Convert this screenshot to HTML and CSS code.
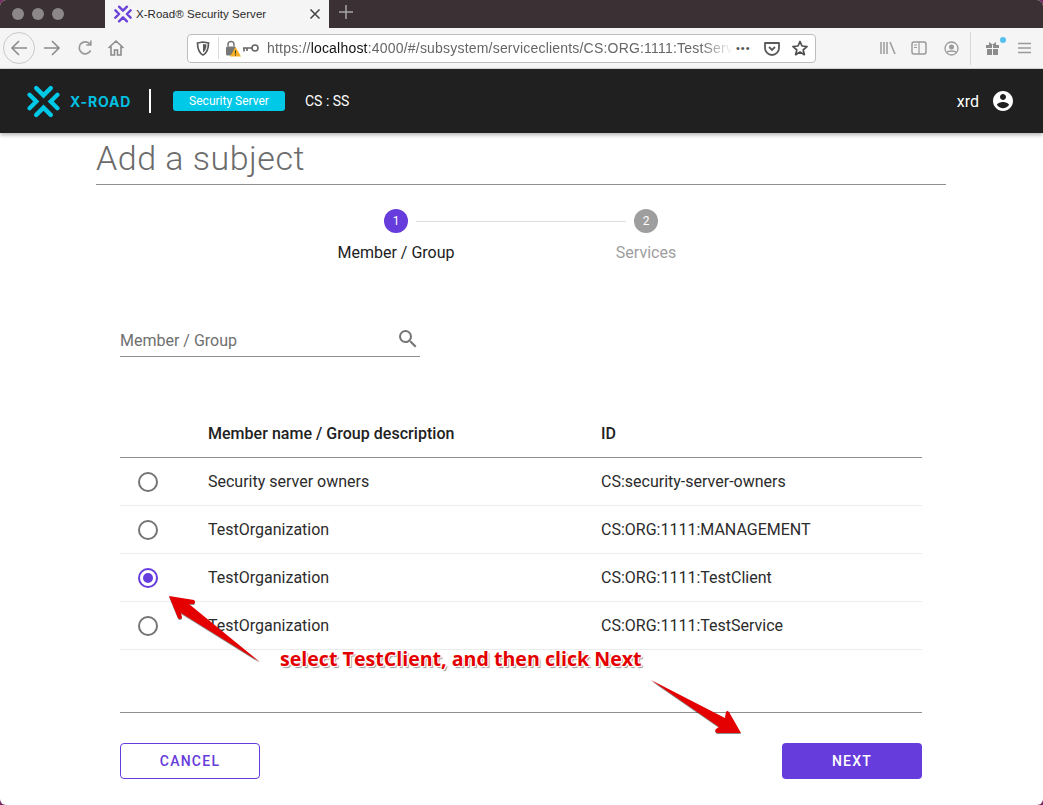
FILE: index.html
```html
<!DOCTYPE html>
<html lang="en">
<head>
<meta charset="utf-8">
<title>X-Road Security Server</title>
<link rel="stylesheet" href="styles.css">
</head>
<body>
<div class="window">
  <div class="tabbar">
    <div class="lights"><i></i><i></i><i></i></div>
    <div class="tab">
      <svg class="tab-logo" width="18" height="18" viewBox="0 0 32 32"><path d="M9 3 16 10 23 3M2.500 9.500 9 16 2.500 22.500M29.500 9.500 23 16 29.500 22.500M9 29 16 22 23 29" fill="none" stroke="#6a42d8" stroke-width="4.200" stroke-linecap="round" stroke-linejoin="round"/></svg>
      <span class="tab-title">X-Road® Security Server</span>
      <svg class="tab-close" width="12" height="12" viewBox="0 0 12 12"><path d="M1.500 1.500 10.500 10.500M10.500 1.500 1.500 10.500" stroke="#444" stroke-width="1.500" fill="none"/></svg>
    </div>
    <svg class="newtab" width="16" height="16" viewBox="0 0 16 16"><path d="M8 1V15M1 8H15" stroke="#a8a4a5" stroke-width="1.500"/></svg>
  </div>

  <div class="toolbar">
    <div class="back"><svg width="18" height="18" viewBox="0 0 18 18"><path d="M17 9H2M9 2 2 9 9 16" fill="none" stroke="#8c8c8c" stroke-width="1.600"/></svg></div>
    <svg class="tool" width="18" height="18" viewBox="0 0 18 18"><path d="M1 9H16M9 2 16 9 9 16" fill="none" stroke="#8c8c8c" stroke-width="1.600"/></svg>
    <svg class="tool tool-tight" width="18" height="18" viewBox="0 0 18 18"><path d="M14.600 11.500A6 6 0 1 1 14 5.200M14.800 1.500V6H10.300" fill="none" stroke="#999" stroke-width="1.700"/></svg>
    <svg class="tool" width="18" height="18" viewBox="0 0 18 18"><path d="M1.500 9 9 2 16.500 9M4 7.500V16H7.500V11H10.500V16H14V7.500" fill="none" stroke="#8c8c8c" stroke-width="1.600"/></svg>
    <div class="urlbar">
      <svg class="shield" width="14" height="15" viewBox="0 0 14 15"><path d="M1.500 2 7 1 12.500 2C12.500 8 11 12 7 14 3 12 1.500 8 1.500 2Z" fill="none" stroke="#5a5a5a" stroke-width="1.700"/><path d="M7 3 10.500 3.500C10.500 7 9.500 10 7 11.500Z" fill="#5a5a5a"/></svg>
      <span class="url-sep"></span>
      <svg class="lock" width="16" height="17" viewBox="0 0 16 17"><path d="M3 6.500V4.500A3 3 0 0 1 9 4.500V6.500" fill="none" stroke="#777" stroke-width="1.500"/><rect x="1" y="6.500" width="10" height="9" rx="1.500" fill="#777"/><path d="M10.500 7 16 16.500H5Z" fill="#f5b022"/><path d="M10.500 10.500V13.500M10.500 14.300V15.500" stroke="#333" stroke-width="1"/></svg>
      <svg class="key" width="18" height="10" viewBox="0 0 18 10"><circle cx="13" cy="5" r="3" fill="none" stroke="#666" stroke-width="1.600"/><path d="M10 5H1M2 5V8.500M5 5V8" stroke="#666" stroke-width="1.600" fill="none"/></svg>
      <span class="url"><span class="url-dim">https://</span><span class="url-host">localhost</span><span class="url-dim">:4000/#/subsystem/serviceclients/CS:ORG:1111:TestServ</span></span>
      <span class="dots">•••</span>
      <svg class="pocket" width="16" height="15" viewBox="0 0 16 15"><path d="M1 2H15V7A7 7 0 0 1 1 7Z" fill="none" stroke="#5a5a5a" stroke-width="1.800" stroke-linejoin="round"/><path d="M5 6 8 9 11 6" fill="none" stroke="#5a5a5a" stroke-width="1.800"/></svg>
      <svg class="star" width="16" height="16" viewBox="0 0 16 16"><path d="M8 1.500 10 6 15 6.500 11.200 9.800 12.300 14.700 8 12.100 3.700 14.700 4.800 9.800 1 6.500 6 6Z" fill="none" stroke="#4d4d4d" stroke-width="1.700" stroke-linejoin="round"/></svg>
    </div>
    <div class="tools-right">
      <svg width="16" height="14" viewBox="0 0 16 14"><path d="M1 1V13M4 1V13M7 1V13M10 1 15 13" stroke="#9a9a9a" stroke-width="1.500" fill="none"/></svg>
      <svg width="16" height="14" viewBox="0 0 16 14"><rect x="1" y="1" width="14" height="12" rx="2" fill="none" stroke="#9a9a9a" stroke-width="1.500"/><path d="M8 1V13M3 4H6M3 6.500H6" stroke="#9a9a9a" stroke-width="1.200" fill="none"/></svg>
      <svg class="profile" width="15" height="15" viewBox="0 0 15 15"><circle cx="7.500" cy="7.500" r="6.500" fill="none" stroke="#9a9a9a" stroke-width="1.300"/><circle cx="7.500" cy="6" r="2.500" fill="#9a9a9a"/><path d="M3 11.500C4 9.500 11 9.500 12 11.500" stroke="#9a9a9a" stroke-width="1.500" fill="none"/></svg>
      <span class="tool-sep"></span>
      <span class="gift"><svg width="15" height="15" viewBox="0 0 15 15"><path d="M4 1 7.500 3.500 11 1V4H4Z" fill="#8c8c8c"/><rect x="1" y="4" width="6" height="3" fill="#8c8c8c"/><rect x="8" y="4" width="6" height="3" fill="#8c8c8c"/><rect x="2" y="8" width="5" height="6" fill="#8c8c8c"/><rect x="8" y="8" width="5" height="6" fill="#8c8c8c"/></svg><i class="gift-dot"></i></span>
      <svg width="13" height="12" viewBox="0 0 13 12"><path d="M0 1.500H13M0 6H13M0 10.500H13" stroke="#9a9a9a" stroke-width="1.400"/></svg>
    </div>
  </div>

  <header class="appbar">
    <svg class="logo" width="33" height="33" viewBox="0 0 32 32"><path d="M9 3 16 10 23 3M2.500 9.500 9 16 2.500 22.500M29.500 9.500 23 16 29.500 22.500M9 29 16 22 23 29" fill="none" stroke="#00c9e7" stroke-width="4.200" stroke-linecap="round" stroke-linejoin="miter"/></svg>
    <span class="brand">X-ROAD</span>
    <span class="brand-sep"></span>
    <span class="badge">Security Server</span>
    <span class="server-id">CS : SS</span>
    <span class="user">xrd</span>
    <svg class="avatar" width="24" height="24" viewBox="0 0 24 24"><path fill="#fff" d="M12 2C6.480 2 2 6.480 2 12s4.480 10 10 10 10-4.480 10-10S17.520 2 12 2zm0 3c1.660 0 3 1.340 3 3s-1.340 3-3 3-3-1.340-3-3 1.340-3 3-3zm0 14.200c-2.500 0-4.710-1.280-6-3.220.03-1.990 4-3.080 6-3.080 1.990 0 5.970 1.090 6 3.080-1.290 1.940-3.500 3.220-6 3.220z"/></svg>
  </header>

  <main class="page">
    <h1 class="title">Add a subject</h1>

    <div class="stepper">
      <div class="step">
        <span class="dot dot-active">1</span>
        <span class="step-label">Member / Group</span>
      </div>
      <span class="step-line"></span>
      <div class="step">
        <span class="dot">2</span>
        <span class="step-label step-label-off">Services</span>
      </div>
    </div>

    <div class="body">
      <div class="search">
        <span>Member / Group</span>
        <svg width="24" height="24" viewBox="0 0 24 24"><path fill="#757575" d="M15.500 14h-.79l-.28-.27A6.470 6.470 0 0 0 16 9.500 6.500 6.500 0 1 0 9.500 16c1.610 0 3.090-.59 4.230-1.570l.27.28v.79l5 4.990L20.490 19l-4.990-5zm-6 0C7.010 14 5 11.990 5 9.500S7.010 5 9.500 5 14 7.010 14 9.500 11.990 14 9.500 14z"/></svg>
      </div>

      <div class="table">
        <div class="row row-head"><span></span><span>Member name / Group description</span><span>ID</span></div>
        <div class="row"><span class="radio"></span><span>Security server owners</span><span>CS:security-server-owners</span></div>
        <div class="row"><span class="radio"></span><span>TestOrganization</span><span>CS:ORG:1111:MANAGEMENT</span></div>
        <div class="row"><span class="radio radio-on"></span><span>TestOrganization</span><span>CS:ORG:1111:TestClient</span></div>
        <div class="row"><span class="radio"></span><span>TestOrganization</span><span>CS:ORG:1111:TestService</span></div>
      </div>

      <div class="footer">
        <button class="btn btn-outline">CANCEL</button>
        <button class="btn btn-fill">NEXT</button>
      </div>
    </div>
  </main>

  <svg class="arrow arrow-left" width="100" height="75" viewBox="0 0 100 75"><path d="M0 1 25 5Q27 7 25 9L20 9 91 67 12 18 13 23Q11 25 9 23Z" fill="#e40000"/></svg>
  <svg class="arrow arrow-right" width="100" height="60" viewBox="0 0 100 60"><path d="M0 0 74 38 75 32Q76 30 78 32L90 53 66 53Q63 51 65 49L68 47Z" fill="#e40000"/></svg>
  <div class="note">select TestClient, and then click Next</div>
</div>
</body>
</html>
```
FILE: styles.css
```css
* { box-sizing: border-box; }
html, body { margin: 0; height: 100%; background: #7a2a63; }
body { font-family: Roboto, "Liberation Sans", sans-serif; overflow: hidden; }
.window {
  position: relative;
  width: 1043px;
  height: 805px;
  background: #fff;
  border-radius: 6px;
  overflow: hidden;
  display: flex;
  flex-direction: column;
}

/* browser chrome */
.tabbar { height: 28px; background: #3b3033; display: flex; align-items: center; flex: none; }
.lights { display: flex; gap: 8px; padding-left: 12px; width: 105px; }
.lights i { width: 12px; height: 12px; border-radius: 50%; background: #8c8889; }
.tab { width: 224px; height: 28px; background: #f5f5f5; display: flex; align-items: center; padding-left: 9px; }
.tab-title { font: 11.500px "Liberation Sans", sans-serif; letter-spacing: .04px; color: #2a2a2a; margin-left: 4px; width: 173px; }
.tab-logo { flex: none; }
.newtab { margin-left: 9px; margin-top: -4px; }

.toolbar { height: 41px; background: #f5f5f5; border-bottom: 1px solid #dcdcdc; display: flex; align-items: center; flex: none; padding-left: 3px; }
.back { width: 32px; height: 32px; border: 1px solid #c9c9c9; border-radius: 50%; display: flex; align-items: center; justify-content: center; margin-right: 8px; }
.tool { margin-right: 15px; }
.tool-tight { margin-right: 13px; }
.urlbar { width: 629px; height: 29px; margin-left: 47px; background: #fff; border: 1px solid #bdbdbd; border-radius: 4px; display: flex; align-items: center; padding-left: 8px; }
.url-sep { width: 1px; height: 22px; background: #dcdcdc; margin: 0 6px 0 8px; }
.key { margin-left: 1px; }
.url { font: 14px "Liberation Sans", sans-serif; letter-spacing: .2px; margin-left: 7px; width: 466px; white-space: nowrap; -webkit-mask-image: linear-gradient(to right, #000 93%, transparent 100%); mask-image: linear-gradient(to right, #000 93%, transparent 100%); }
.url-dim { color: #666; }
.url-host { color: #111; }
.dots { font: 11px "Liberation Sans", sans-serif; color: #555; margin-left: 3px; letter-spacing: 1px; }
.pocket { margin-left: 13px; }
.star { margin-left: 12px; }
.tools-right { display: flex; align-items: center; margin-left: 64px; gap: 15px; }
.profile { margin-left: 2px; }
.tool-sep { width: 1px; height: 33px; background: #d8d8d8; margin-left: -4px; margin-right: -1px; }
.gift { position: relative; display: flex; margin-right: 3px; }
.gift-dot { position: absolute; top: -4px; right: -6px; width: 6px; height: 6px; border-radius: 50%; background: #55bfee; }

/* app bar */
.appbar { height: 64px; background: #202020; display: flex; align-items: center; padding-left: 27px; flex: none; box-shadow: 0 2px 4px rgba(0,0,0,.3); position: relative; }
.brand { font-family: Inter, Roboto, sans-serif; font-weight: 700; font-size: 14px; letter-spacing: .8px; color: #00c0e0; margin-left: 10px; width: 62px; white-space: nowrap; }
.brand-sep { width: 2px; height: 24px; background: #fff; margin-left: 17px; }
.badge { width: 112px; height: 20px; margin-left: 22px; background: #00c9e7; border-radius: 3px; color: #fff; font-size: 12px; line-height: 20px; text-align: center; }
.server-id { color: #fff; font-size: 14px; margin-left: 20px; }
.user { color: #fff; font-size: 16px; margin-left: auto; }
.avatar { margin: 0 28px 0 12px; }

/* page */
.page { width: 850px; margin-left: 96px; flex: 1; display: flex; flex-direction: column; min-height: 0; }
.title { margin: 0; height: 52px; border-bottom: 1px solid #8f8f8f; font-weight: 300; font-size: 34px; line-height: 50px; color: #6b6b6b; letter-spacing: .5px; }

.stepper { display: flex; justify-content: center; align-items: flex-start; padding-top: 24px; height: 117px; }
.step { display: flex; flex-direction: column; align-items: center; width: 120px; }
.dot { width: 24px; height: 24px; border-radius: 50%; background: #9e9e9e; color: #fff; font-size: 12px; line-height: 24px; text-align: center; }
.dot-active { background: #663cdc; }
.step-label { margin-top: 10px; font-size: 16px; line-height: 19px; color: #212121; white-space: nowrap; }
.step-label-off { color: #9e9e9e; }
.step-line { width: 210px; height: 1px; background: #dedede; margin: 12px -40px 0; }

.body { padding: 0 24px; display: flex; flex-direction: column; flex: 1; }
.search { width: 300px; height: 55px; padding-bottom: 6px; border-bottom: 1px solid #8f8f8f; display: flex; align-items: flex-end; justify-content: space-between; font-size: 16px; color: #6f6f6f; }
.search svg { position: relative; top: 1px; }
.search span { line-height: 19px; }

.table { margin-top: 53px; }
.row { display: grid; grid-template-columns: 88px 393px 1fr; align-items: center; height: 48px; border-bottom: 1px solid #ececec; font-size: 16px; color: #2b2b2b; }
.row-head { height: 48px; border-bottom-color: #8f8f8f; font-weight: 500; color: #212121; letter-spacing: .03px; }
.radio { width: 20px; height: 20px; margin-left: 18px; border: 2px solid #757575; border-radius: 50%; display: block; }
.radio-on { border-color: #663cdc; position: relative; }
.radio-on::after { content: ""; position: absolute; inset: 3px; border-radius: 50%; background: #663cdc; }

.footer { margin-top: 62px; border-top: 1px solid #8f8f8f; padding-top: 30px; display: flex; justify-content: space-between; }
.btn { width: 140px; height: 36px; border-radius: 4px; font-family: Roboto, sans-serif; font-weight: 500; font-size: 14px; letter-spacing: 1.250px; }
.btn-outline { background: #fff; border: 1px solid #663cdc; color: #663cdc; }
.btn-fill { background: #663cdc; border: 0; color: #fff; }

/* annotations */
.arrow { position: absolute; filter: drop-shadow(0 1px .5px rgba(0,0,0,.45)); }
.arrow-left { left: 169px; top: 595px; }
.arrow-right { left: 651px; top: 680px; }
.note {
  position: absolute;
  left: 280px;
  top: 647px;
  font-family: "Open Sans", "Liberation Sans", sans-serif;
  font-weight: 700;
  font-size: 19.600px;
  line-height: 24px;
  color: #e40000;
  white-space: nowrap;
  text-shadow: 1px 1px 0 #fff, -1px -1px 0 #fff, 1px -1px 0 #fff, -1px 1px 0 #fff, 2px 2px 1px #999;
}
```
